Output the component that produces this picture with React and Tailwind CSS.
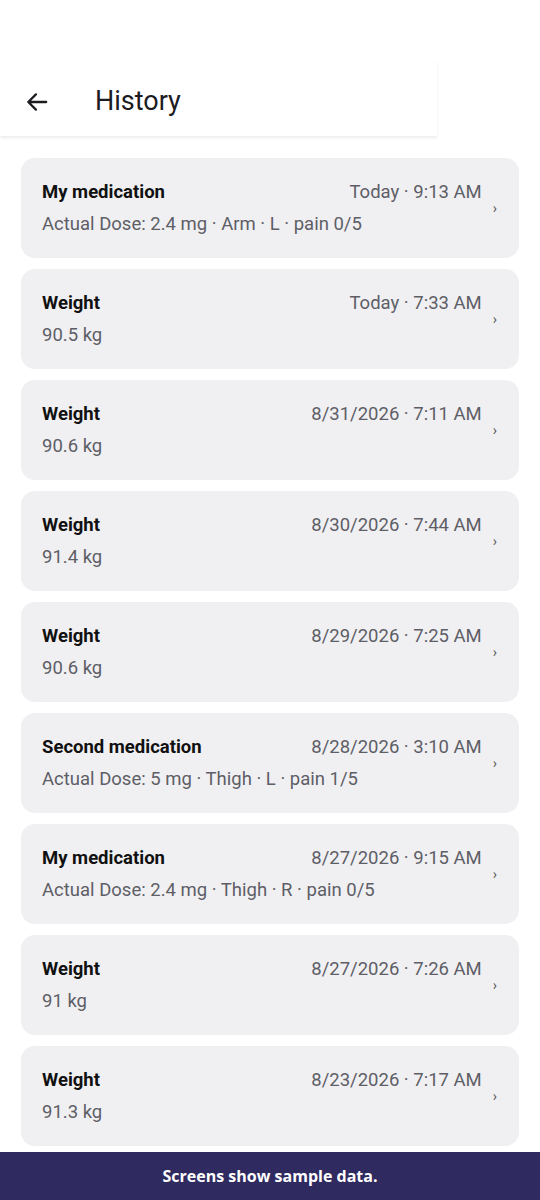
import React from "react";

const items = [
  { t: "My medication", d: "Today · 9:13 AM", s: "Actual Dose: 2.4 mg · Arm · L · pain 0/5" },
  { t: "Weight", d: "Today · 7:33 AM", s: "90.5 kg" },
  { t: "Weight", d: "8/31/2026 · 7:11 AM", s: "90.6 kg" },
  { t: "Weight", d: "8/30/2026 · 7:44 AM", s: "91.4 kg" },
  { t: "Weight", d: "8/29/2026 · 7:25 AM", s: "90.6 kg" },
  { t: "Second medication", d: "8/28/2026 · 3:10 AM", s: "Actual Dose: 5 mg · Thigh · L · pain 1/5" },
  { t: "My medication", d: "8/27/2026 · 9:15 AM", s: "Actual Dose: 2.4 mg · Thigh · R · pain 0/5" },
  { t: "Weight", d: "8/27/2026 · 7:26 AM", s: "91 kg" },
  { t: "Weight", d: "8/23/2026 · 7:17 AM", s: "91.3 kg" },
];

export default function App() {
  return (
    <div className="w-[540px] h-[1200px] bg-white relative overflow-hidden" style={{ fontFamily: "Roboto, 'Noto Sans', sans-serif" }}>
      <div className="h-[60px]" />
      <div className="w-[437px] h-[76px] flex items-center pt-[7px] shadow-[0_2px_3px_rgba(0,0,0,0.08)] bg-white relative z-10">
        <svg width="26" height="26" viewBox="0 0 24 24" className="ml-[24px] text-[#1c1b1f]" fill="none" stroke="currentColor" strokeWidth="2.1" strokeLinecap="round" strokeLinejoin="round">
          <path d="M20.5 12H4M11 5l-7 7 7 7" />
        </svg>
        <span className="ml-[45px] text-[27px] text-[#1c1b1f] leading-none">History</span>
      </div>
      <div className="px-[21px] pt-[22px] flex flex-col gap-[11px]">
        {items.map((it, i) => (
          <div key={i} className="h-[100px] rounded-[14px] bg-[#f0f0f3] flex items-center pl-[21px] pr-[22px]">
            <div className="flex-1 flex flex-col gap-[8px]">
              <div className="flex justify-between items-baseline leading-[24px]">
                <span className="text-[18.5px] font-bold text-[#111]">{it.t}</span>
                <span className="text-[18.5px] text-[#5e5e66]">{it.d}</span>
              </div>
              <span className="text-[18.5px] leading-[24px] text-[#5e5e66]">{it.s}</span>
            </div>
            <span className="ml-[11px] text-[14px] text-[#555] leading-none">›</span>
          </div>
        ))}
      </div>
      <div className="absolute bottom-0 left-0 right-0 h-[48px] bg-[#2f2a5f] flex items-center justify-center">
        <span className="text-white font-bold text-[16px]" style={{ fontFamily: "'Open Sans', sans-serif" }}>Screens show sample data.</span>
      </div>
    </div>
  );
}
